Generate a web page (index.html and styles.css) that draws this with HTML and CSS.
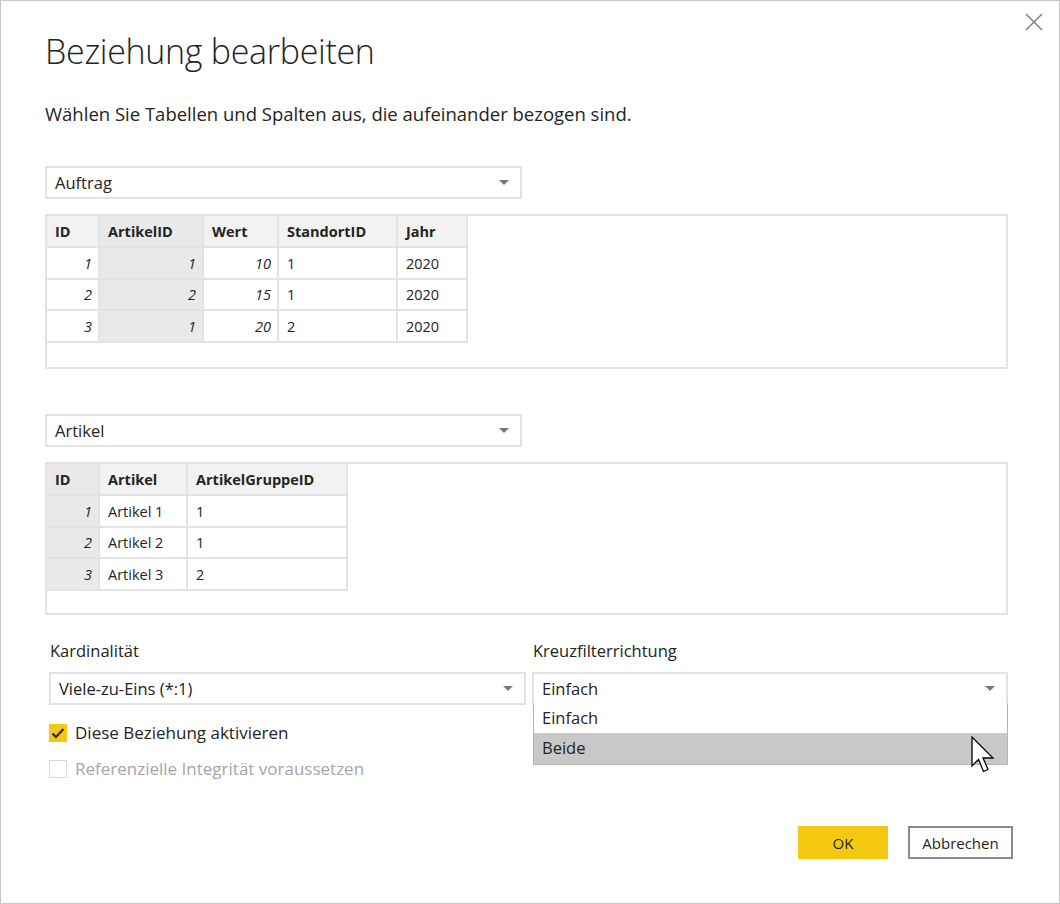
FILE: index.html
```html
<!DOCTYPE html>
<html lang="de">
<head>
<meta charset="utf-8">
<title>Beziehung bearbeiten</title>
<link rel="stylesheet" href="styles.css">
</head>
<body>
<div class="dialog">
  <button class="close" aria-label="Schließen">
    <svg width="18" height="18" viewBox="0 0 18 18"><path d="M1 1 L17 17 M17 1 L1 17" stroke="#7a7a7a" stroke-width="1.4" fill="none"/></svg>
  </button>
  <h1 class="title">Beziehung bearbeiten</h1>
  <p class="subtitle">Wählen Sie Tabellen und Spalten aus, die aufeinander bezogen sind.</p>

  <div class="select select-table">
    <span>Auftrag</span>
    <span class="caret"></span>
  </div>
  <div class="grid-box">
    <table class="grid">
      <colgroup><col style="width:52px"><col style="width:104px"><col style="width:75px"><col style="width:119px"><col style="width:70px"></colgroup>
      <thead><tr><th>ID</th><th class="sel">ArtikelID</th><th>Wert</th><th>StandortID</th><th>Jahr</th></tr></thead>
      <tbody>
        <tr><td class="num">1</td><td class="num sel">1</td><td class="num">10</td><td>1</td><td>2020</td></tr>
        <tr><td class="num">2</td><td class="num sel">2</td><td class="num">15</td><td>1</td><td>2020</td></tr>
        <tr><td class="num">3</td><td class="num sel">1</td><td class="num">20</td><td>2</td><td>2020</td></tr>
      </tbody>
    </table>
  </div>

  <div class="select select-table select-second">
    <span>Artikel</span>
    <span class="caret"></span>
  </div>
  <div class="grid-box grid-box-second">
    <table class="grid">
      <colgroup><col style="width:52px"><col style="width:88px"><col style="width:160px"></colgroup>
      <thead><tr><th class="sel">ID</th><th>Artikel</th><th>ArtikelGruppeID</th></tr></thead>
      <tbody>
        <tr><td class="num sel">1</td><td>Artikel 1</td><td>1</td></tr>
        <tr><td class="num sel">2</td><td>Artikel 2</td><td>1</td></tr>
        <tr><td class="num sel">3</td><td>Artikel 3</td><td>2</td></tr>
      </tbody>
    </table>
  </div>

  <div class="options">
    <div class="col">
      <div class="label">Kardinalität</div>
      <div class="select">
        <span>Viele-zu-Eins (*:1)</span>
        <span class="caret"></span>
      </div>
      <div class="check-row">
        <span class="box checked">
          <svg width="18" height="18" viewBox="0 0 18 18"><path d="M3.5 9.5 L7 13 L14.5 5" stroke="#2b2b2b" stroke-width="2.2" fill="none"/></svg>
        </span>
        <span>Diese Beziehung aktivieren</span>
      </div>
      <div class="check-row disabled">
        <span class="box"></span>
        <span>Referenzielle Integrität voraussetzen</span>
      </div>
    </div>
    <div class="col col-right">
      <div class="label">Kreuzfilterrichtung</div>
      <div class="select open">
        <span>Einfach</span>
        <span class="caret"></span>
        <ul class="menu">
          <li>Einfach</li>
          <li class="hover">Beide</li>
        </ul>
        <svg class="cursor" width="26" height="40" viewBox="0 0 26 40"><path d="M1 1 L1 30 L7.5 23.5 L12.5 35.5 L17 33.5 L12 22 L22 22 Z" fill="#ffffff" stroke="#000000" stroke-width="1.3" stroke-linejoin="miter"/></svg>
      </div>
    </div>
  </div>

  <div class="footer">
    <button class="btn btn-primary">OK</button>
    <button class="btn btn-secondary">Abbrechen</button>
  </div>
</div>
</body>
</html>
```

FILE: styles.css
```css
html, body {
  margin: 0;
  padding: 0;
  background: #ffffff;
}

body {
  font-family: "Open Sans", "Noto Sans", sans-serif;
  color: #333333;
}

.dialog {
  position: relative;
  box-sizing: border-box;
  width: 1060px;
  height: 904px;
  border: 1px solid #c8c8c8;
  padding: 30px 46px 0 44px;
}

.close {
  position: absolute;
  top: 12px;
  right: 16px;
  width: 18px;
  height: 18px;
  padding: 0;
  border: 0;
  background: transparent;
}

.close svg { display: block; }

.title {
  margin: 0;
  font-weight: 300;
  font-size: 34px;
  line-height: 40px;
  letter-spacing: -0.3px;
  color: #252423;
}

.subtitle {
  margin: 31px 0 0;
  font-size: 18.5px;
  line-height: 24px;
  color: #252423;
}

.select {
  position: relative;
  box-sizing: border-box;
  display: flex;
  align-items: center;
  width: 477px;
  height: 33px;
  border: 2px solid #e3e3e3;
  padding: 0 0 0 8px;
  font-size: 16.5px;
  color: #252423;
}

.select-table {
  margin-top: 40px;
}

.select-second {
  margin-top: 45px;
}

.caret {
  position: absolute;
  right: 11px;
  top: 12px;
  width: 0;
  height: 0;
  border-left: 5px solid transparent;
  border-right: 5px solid transparent;
  border-top: 5px solid #7a7a7a;
}

.grid-box {
  box-sizing: border-box;
  width: 963px;
  height: 155px;
  margin-top: 15px;
  border: 2px solid #e3e3e3;
}

.grid-box-second {
  height: 153px;
}

.grid {
  border-collapse: collapse;
  table-layout: fixed;
  font-size: 14.5px;
  color: #252423;
}

.grid th,
.grid td {
  box-sizing: border-box;
  height: 31px;
  padding: 0 8px;
  border-right: 2px solid #e3e3e3;
  border-bottom: 2px solid #e3e3e3;
  text-align: left;
  white-space: nowrap;
}

.grid tbody tr:nth-child(odd) td {
  height: 32px;
}

.grid th {
  font-weight: 700;
  background: #f2f2f2;
}

.grid td {
  background: #ffffff;
}

.grid td.num {
  text-align: right;
  font-style: italic;
  padding-right: 6px;
}

.grid .sel,
.grid td.sel {
  background: #e9e9e9;
}

.options {
  display: flex;
  gap: 6px;
  margin-top: 25px;
  padding-left: 4px;
}

.col {
  display: flex;
  flex-direction: column;
  flex: 0 0 477px;
  width: 477px;
}

.col-right {
  flex: 0 0 476px;
  width: 476px;
}

.label {
  font-size: 16.5px;
  line-height: 22px;
  padding-left: 1px;
  color: #252423;
}

.col .select {
  width: 100%;
  margin-top: 10px;
}

.check-row {
  display: flex;
  align-items: center;
  gap: 8px;
  margin-top: 19px;
  font-size: 17px;
  line-height: 18px;
  color: #252423;
}

.check-row + .check-row {
  margin-top: 18px;
}

.box {
  box-sizing: border-box;
  width: 18px;
  height: 18px;
  border: 1px solid #d9d9d9;
  background: #ffffff;
}

.box.checked {
  border: 0;
  background: #f2c811;
}

.box svg { display: block; }

.check-row.disabled {
  color: #a6a6a6;
}

.menu {
  position: absolute;
  left: -1px;
  right: -2px;
  top: 29px;
  margin: 0;
  padding: 0;
  list-style: none;
  background: #ffffff;
  border: 1px solid #b4b4b4;
  border-top: 0;
  z-index: 2;
}

.menu li {
  height: 30px;
  line-height: 30px;
  padding-left: 8px;
  font-size: 16.5px;
  color: #252423;
}

.menu li.hover {
  background: #c8c8c8;
  height: 31px;
}

.cursor {
  position: absolute;
  left: 437px;
  top: 62px;
  z-index: 3;
}

.footer {
  position: absolute;
  right: 46px;
  top: 825px;
  display: flex;
  gap: 20px;
}

.btn {
  box-sizing: border-box;
  height: 33px;
  font-family: "Open Sans", "Noto Sans", sans-serif;
  font-size: 15px;
  color: #252423;
  padding: 0;
}

.btn-primary {
  width: 90px;
  border: 0;
  background: #f2c811;
}

.btn-secondary {
  width: 105px;
  border: 2px solid #8a8a8a;
  background: #ffffff;
}
```
